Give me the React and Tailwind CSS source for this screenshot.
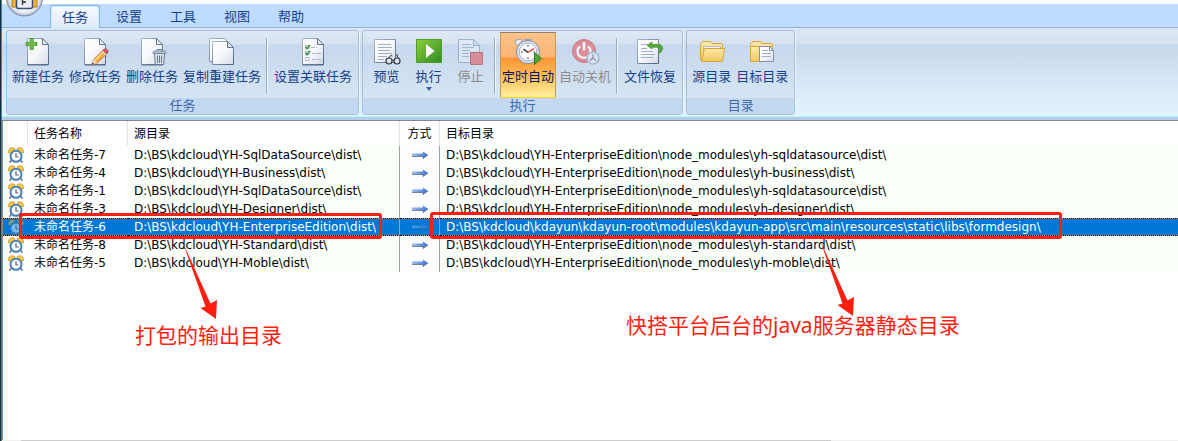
import React, { useState } from 'react';

const TABS = ["任务", "设置", "工具", "视图", "帮助"];

const TASKS = [
  { id: 7, source: "D:\\BS\\kdcloud\\YH-SqlDataSource\\dist\\", target: "D:\\BS\\kdcloud\\YH-EnterpriseEdition\\node_modules\\yh-sqldatasource\\dist\\" },
  { id: 4, source: "D:\\BS\\kdcloud\\YH-Business\\dist\\", target: "D:\\BS\\kdcloud\\YH-EnterpriseEdition\\node_modules\\yh-business\\dist\\" },
  { id: 1, source: "D:\\BS\\kdcloud\\YH-SqlDataSource\\dist\\", target: "D:\\BS\\kdcloud\\YH-EnterpriseEdition\\node_modules\\yh-sqldatasource\\dist\\" },
  { id: 3, source: "D:\\BS\\kdcloud\\YH-Designer\\dist\\", target: "D:\\BS\\kdcloud\\YH-EnterpriseEdition\\node_modules\\yh-designer\\dist\\" },
  { id: 6, source: "D:\\BS\\kdcloud\\YH-EnterpriseEdition\\dist\\", target: "D:\\BS\\kdcloud\\kdayun\\kdayun-root\\modules\\kdayun-app\\src\\main\\resources\\static\\libs\\formdesign\\" },
  { id: 8, source: "D:\\BS\\kdcloud\\YH-Standard\\dist\\", target: "D:\\BS\\kdcloud\\YH-EnterpriseEdition\\node_modules\\yh-standard\\dist\\" },
  { id: 5, source: "D:\\BS\\kdcloud\\YH-Moble\\dist\\", target: "D:\\BS\\kdcloud\\YH-EnterpriseEdition\\node_modules\\yh-moble\\dist\\" },
];

const Icon = ({ children }) => (
  <svg viewBox="0 0 32 32" className="w-8 h-8 shrink-0" aria-hidden="true">{children}</svg>
);

// gradients shared by all icons
const Defs = () => (
  <svg className="absolute w-0 h-0" aria-hidden="true">
    <defs>
      <linearGradient id="paper" x1="0" y1="0" x2="1" y2="1">
        <stop offset="0" stopColor="#ffffff" />
        <stop offset="0.5" stopColor="#f7f8fb" />
        <stop offset="1" stopColor="#d3dae6" />
      </linearGradient>
      <linearGradient id="paperEdge" x1="0" y1="0" x2="1" y2="1">
        <stop offset="0" stopColor="#a9b8cc" />
        <stop offset="1" stopColor="#4f6482" />
      </linearGradient>
      <linearGradient id="green" x1="0" y1="0" x2="1" y2="1">
        <stop offset="0" stopColor="#8ccf3e" />
        <stop offset="1" stopColor="#2f8a22" />
      </linearGradient>
      <linearGradient id="folder" x1="0" y1="0" x2="0" y2="1">
        <stop offset="0" stopColor="#fdeaa8" />
        <stop offset="1" stopColor="#f3c75e" />
      </linearGradient>
      <linearGradient id="arrowBlue" gradientUnits="userSpaceOnUse" x1="0" y1="0" x2="16" y2="0">
        <stop offset="0" stopColor="#9dbdf0" />
        <stop offset="1" stopColor="#3f74cc" />
      </linearGradient>
      <radialGradient id="orb" cx="0.5" cy="0.5" r="0.5">
        <stop offset="0.6" stopColor="#ffffff" />
        <stop offset="0.85" stopColor="#dfe5ee" />
        <stop offset="1" stopColor="#9fb0c6" />
      </radialGradient>
    </defs>
  </svg>
);

const Page = ({ x = 5.5, y = 3.5 }) => (
  <g transform={`translate(${x} ${y})`}>
    <path d="M0 0H15L21 6V26H0Z" fill="url(#paper)" stroke="url(#paperEdge)" />
    <path d="M15 0V6H21Z" fill="#e6ebf3" stroke="#5f7594" />
    <path d="M0 26.5H21" stroke="#5b6f8d" />
  </g>
);

const NewIcon = () => (
  <Icon>
    <Page />
    <path d="M8 3.500h3.400v3.700H15v3.400h-3.600v4H8v-4H4V7.200H8Z" fill="#6fb944" stroke="#3f8f2c" strokeWidth="0.7" />
  </Icon>
);

const EditIcon = () => (
  <Icon>
    <Page />
    <path d="M13 29.500l1.600-5L24 15.200l4 3.600L18.200 28Z" fill="#f5ab3c" stroke="#b5651d" strokeWidth="0.8" />
    <path d="M15.500 25.500L25 16.300" stroke="#ffe2a1" strokeWidth="1.200" />
    <path d="M24 15.200l1.700-1.400c1.300-.6 3.700 1.300 3.500 2.900L28 18.800Z" fill="#e0565c" stroke="#8f4650" strokeWidth="0.7" />
    <path d="M23 16.200l4 3.700" stroke="#cfd6e3" strokeWidth="1.300" />
    <path d="M13 29.500l1.600-5 3.600 3.500Z" fill="#fbe0ba" />
    <path d="M13 29.500l.7-2 1.400 1.300Z" fill="#333" />
  </Icon>
);

const DeleteIcon = () => (
  <Icon>
    <Page />
    <path d="M18.500 18.500H28.500L27.700 29.500H19.300Z" fill="#dfe5ed" stroke="#66788f" />
    <path d="M21.500 20.500V28M23.500 20.500V28M25.500 20.500V28" stroke="#66788f" />
    <path d="M17 17.500q0-1.500 1.500-1.500H28.500q1.500 0 1.500 1.500V18.500H17Z" fill="#b7c3d3" stroke="#70839c" strokeWidth="0.8" />
    <path d="M21 15.800v-1.300h5v1.300" fill="none" stroke="#70839c" />
  </Icon>
);

const CopyIcon = () => (
  <Icon>
    <path d="M3.500 3.500H18.500L24.500 9.500V26.500H3.500Z" fill="url(#paper)" stroke="url(#paperEdge)" />
    <path d="M6.500 6.500H21.500L27.500 12.500V29.500H6.500Z" fill="url(#paper)" stroke="url(#paperEdge)" />
    <path d="M21.500 6.500V12.500H27.500Z" fill="#e6ebf3" stroke="#5f7594" />
  </Icon>
);

const LinkedIcon = () => (
  <Icon>
    <Page />
    <path d="M8.500 10.500h3.500v3.500h-3.500zM8.500 16.500h3.500v3.500h-3.500zM8.500 22.500h3.500v3h-3.500z" fill="#fff" stroke="#90a2bb" strokeWidth="0.8" />
    <path d="M8.500 11.500l1.500 2 3-3.500M8.500 17.500l1.500 2 3-3.500" fill="none" stroke="#2f8a22" strokeWidth="1.200" />
    <path d="M14 12.500h6M15 18.500h9M15 24.500h9" stroke="#a9b6c8" strokeDasharray="4 1" />
  </Icon>
);

const PreviewIcon = () => (
  <Icon>
    <path d="M3.500 4.500H24.500V27.500H3.500Z" fill="url(#paper)" stroke="url(#paperEdge)" />
    <path d="M7 9.500h13M7 12.500h14M7 15.500h12M7 18.500h14M7 21.500h9M7 24.500h6" stroke="#9fb0c8" />
    <circle cx="18" cy="26" r="3" fill="#e4eaf1" fillOpacity="0.8" stroke="#333a44" strokeWidth="1.200" />
    <circle cx="26" cy="26" r="3" fill="#e4eaf1" fillOpacity="0.8" stroke="#333a44" strokeWidth="1.200" />
    <path d="M21 25.500q1-1 2 0M16 24l4-3.500 1.500.5M28 24l-2.500-4 1.500-.5" fill="none" stroke="#333a44" />
  </Icon>
);

const RunIcon = () => (
  <Icon>
    <path d="M3.500 4.500H28.500V27.500H3.500Z" fill="url(#green)" stroke="#4f9e2c" />
    <path d="M13 9L21.500 16L13 23Z" fill="#fff" />
  </Icon>
);

const StopIcon = () => (
  <Icon>
    <g opacity="0.65">
      <path d="M3.500 4.500H18.500L24.500 10.500V27.500H3.500Z" fill="#e6edf6" stroke="#7d98bf" />
      <path d="M18.500 4.500V10.500H24.500Z" fill="#d5e0ee" stroke="#7d98bf" />
      <path d="M7 9.500h9M7 12.500h12M7 15.500h8M7 18.500h7M7 21.500h7" stroke="#88a4cd" />
    </g>
    <path d="M15.500 17.500H27.500V29.500H15.500Z" fill="#d88e98" stroke="#b9707f" />
  </Icon>
);

const TimerIcon = () => (
  <Icon>
    <path d="M3 8.500l1-3.500L9 4l1 2.500L5.500 10.500Z" fill="#e8edf4" stroke="#8592a8" strokeWidth="0.8" />
    <path d="M12.500 4.500h7M16 4.500v3" stroke="#9aa6ba" strokeWidth="1.500" />
    <circle cx="16" cy="17" r="11.500" fill="#dfe6f0" stroke="#7e8ba3" />
    <circle cx="16" cy="17" r="8.800" fill="#fff" stroke="#a2afc4" />
    <path d="M16 10v1.500M9 17h1.500M21.500 17h1.500M16 22.500v1.500" stroke="#2a3550" strokeWidth="1.200" />
    <path d="M16 17.500l-4.500-3.500" stroke="#222" strokeWidth="1.400" />
    <path d="M16 17.500l6-4" stroke="#e0332c" strokeWidth="1.300" />
    <path d="M22.500 17.500L29.500 23.500L22.500 29.500Z" fill="#53a832" stroke="#2f7d1d" />
  </Icon>
);

const ShutdownIcon = () => (
  <Icon>
    <circle cx="15" cy="16" r="11.500" fill="#d98d98" stroke="#c97e8a" />
    <path d="M11 11.300a6.500 6.500 0 1 0 8 0" fill="none" stroke="#f0f1f7" strokeWidth="2.400" />
    <path d="M15 7v8.500" stroke="#f0f1f7" strokeWidth="2.600" />
    <circle cx="24" cy="23" r="6" fill="#dae3ef" stroke="#a7b7cf" strokeWidth="1.500" />
    <path d="M24 19V23l-3 2.500M24 23l3 2.500" fill="none" stroke="#8090ab" strokeWidth="1.100" />
  </Icon>
);

const RestoreIcon = () => (
  <Icon>
    <path d="M3.500 4.500H24.500V28.500H3.500Z" fill="url(#paper)" stroke="url(#paperEdge)" />
    <path d="M7 9.500h8M7 13.500h6M7 16.500h12M7 19.500h14M7 22.500h12" stroke="#9fb0c8" />
    <path d="M13 10.500L18 7V9.300H23C27.500 9.300 29 11.500 28.500 14.500Q27.700 17.700 24.500 18.500V15.800C26 15 26 12.500 23.500 12.300H18V14Z" fill="#55a637" stroke="#37862a" strokeWidth="0.600" />
  </Icon>
);

const FolderBack = () => (
  <path d="M4.500 24.500V9.500l2-3h8l1.500 2H25.500q1 0 1 1.500V24.500Z" fill="url(#folder)" stroke="#d9a73c" />
);

const SourceIcon = () => (
  <Icon>
    <FolderBack />
    <path d="M7.500 11.500h17v10H7.500Z" fill="#f4f6fa" stroke="#9aa6b8" strokeWidth="0.700" />
    <path d="M8.500 13.500H28.500L26.500 26.500H5.500Z" fill="url(#folder)" stroke="#d9a73c" />
  </Icon>
);

const TargetIcon = () => (
  <Icon>
    <FolderBack />
    <path d="M4.500 11.500h22V26.500H4.500Z" fill="url(#folder)" stroke="#d9a73c" />
    <path d="M13.500 11.500H23.500L27.500 15.500V26.500H13.500Z" fill="url(#paper)" stroke="#8294ae" />
    <path d="M23.500 11.500V15.500H27.500" fill="none" stroke="#8294ae" />
    <path d="M16 15.500h6M16 18.500h9M16 21.500h9" stroke="#9fb0c8" />
  </Icon>
);

const ClockIcon = ({ dim }) => (
  <svg viewBox="0 0 16 16" className={`block w-4 h-4 ${dim ? "opacity-50" : ""}`} aria-hidden="true">
    <path d="M3.500 13L1.500 15.800M12.500 13L14.500 15.800" stroke="#6c7480" strokeWidth="1.500" />
    <circle cx="8" cy="9.300" r="5.500" fill="#fdfdfd" stroke="#4682b8" strokeWidth="2" />
    <path d="M0.500 5.800C-0.300 2 3.500 -0.800 7 1.800Q6.500 3.300 4.500 3.800Q3 4.500 2.300 6Z" fill="#fbc93c" stroke="#b98a26" strokeWidth="0.700" />
    <path d="M15.500 5.800C16.300 2 12.500 -0.800 9 1.800Q9.500 3.300 11.500 3.800Q13 4.500 13.700 6Z" fill="#fbc93c" stroke="#b98a26" strokeWidth="0.700" />
    <path d="M8 6V10H10.500" fill="none" stroke="#5d6672" strokeWidth="1.200" />
  </svg>
);

const DirectionIcon = ({ dim }) => (
  <svg viewBox="0 0 16 8" className={`mx-auto block h-2 w-4 ${dim ? "opacity-50" : ""}`} aria-hidden="true">
    <path d="M0 2.500H11V0.500L16 4L11 7.500V5.500H0Z" fill="url(#arrowBlue)" />
    <path d="M0 5.500H11V7.500L16 4" fill="none" stroke="#4d6184" strokeWidth="0.700" />
  </svg>
);

const Orb = () => (
  <svg viewBox="0 0 40 18" className="absolute left-0.5 top-0 h-[18px] w-10" aria-hidden="true">
    <circle cx="20.500" cy="-2" r="18" fill="url(#orb)" stroke="#7f8da3" />
    <path d="M8 -2h5v9H8ZM28 -2h5v9H28Z" fill="#f3b43a" stroke="#b27a1d" />
    <path d="M12.500 -2H28.500V6.500Q28.500 8.500 26.500 8.500H14.500Q12.500 8.500 12.500 6.500Z" fill="#e9edf4" stroke="#39507c" strokeWidth="1.500" />
    <path d="M18.500 5V0M18.500 2H22" fill="none" stroke="#3a2c2c" strokeWidth="1.300" />
  </svg>
);

const RibbonButton = ({ icon, label, active, disabled, dropdown, onClick }) => {
  const color = disabled ? "text-[#8d8d8d]" : active ? "text-[#0a1466]" : "text-[#15428b]";
  const frame = active
    ? "border-[#c99a4a] border-t-[#8e8165] border-b-[#ffd02c] bg-[linear-gradient(to_bottom,#fbc38a_0%,#fdb573_38%,#fb9234_39%,#fdc25a_70%,#fff0a0_100%)]"
    : "border-transparent";
  return (
    <button
      type="button"
      disabled={disabled}
      onClick={onClick}
      className={`flex h-[66px] min-w-[41px] flex-col items-center border px-px pt-0.5 text-[13px] leading-[18px] whitespace-nowrap ${color} ${frame}`}
    >
      {icon}
      <span>{label}</span>
      {dropdown && (
        <svg viewBox="0 0 6 4" className="mt-0.5 h-1 w-1.5" aria-hidden="true">
          <path d="M0 0H6L3 4Z" fill="#3f64a5" />
        </svg>
      )}
    </button>
  );
};

const Separator = () => (
  <div className="mt-1.5 mr-[3px] ml-0.5 h-14 w-0.5 border-l border-[#8fabd3] bg-[#f3f8fd]" />
);

const RibbonGroup = ({ title, children }) => (
  <section className="flex h-[85px] flex-col overflow-hidden rounded-[3px] border border-[#a3bfdc] bg-[linear-gradient(to_bottom,#dfe9f5_0px,#d5e1f1_13px,#c7d8ed_14px,#d6e5f4_68px)] shadow-[1px_1px_0_#eef6fd]">
    <div className="flex flex-1 gap-px pt-px pr-1 pl-[3px]">{children}</div>
    <h2 className="h-4 bg-[#c2d9f1] text-center text-[13px] leading-[14px] text-[#3e6aaa]">{title}</h2>
  </section>
);

const HEAD_CELL = "border-r border-[#e5e5e5] pl-1.5 text-left font-normal";

const TaskTable = ({ selected, onSelect }) => (
  <table className="w-full table-fixed border-separate border-spacing-0 font-['DejaVu_Sans','Noto_Sans_CJK_SC',sans-serif] text-[12px] leading-4 whitespace-nowrap text-black">
    <colgroup>
      <col className="w-[25px]" />
      <col className="w-[100px]" />
      <col className="w-[272px]" />
      <col className="w-10" />
      <col />
    </colgroup>
    <thead>
      <tr className="h-[25px]">
        <th className={HEAD_CELL} aria-label="图标"></th>
        <th className={HEAD_CELL}>任务名称</th>
        <th className={HEAD_CELL}>源目录</th>
        <th className="border-r border-[#e5e5e5] text-center font-normal">方式</th>
        <th className="pl-1.5 text-left font-normal">目标目录</th>
      </tr>
    </thead>
    <tbody>
      {TASKS.map((task) => {
        const on = task.id === selected;
        // focus rectangle: black dots over the orange row background
        const cell = on
          ? "h-[18px] overflow-hidden border-y border-dotted border-y-black bg-[#0078d7] bg-clip-padding text-white"
          : "h-[18px] overflow-hidden";
        return (
          <tr key={task.id} onClick={() => onSelect(task.id)} className={on ? "bg-[#ff8728]" : "bg-white"}>
            <td className={`${cell} pl-[5px]`}><ClockIcon dim={on} /></td>
            <td className={`${cell} pl-1.5`}>未命名任务-{task.id}</td>
            <td className={`${cell} border-r border-r-[#a0a0a0] pl-1.5 [border-right-style:solid] ${on ? "" : "bg-[#fafffa]"}`}>{task.source}</td>
            <td className={`${cell} border-r border-r-[#a0a0a0] [border-right-style:solid] ${on ? "" : "bg-[#fdfcff]"}`}><DirectionIcon dim={on} /></td>
            <td className={`${cell} pl-1.5 ${on ? "" : "bg-[#fafffa]"}`}>{task.target}</td>
          </tr>
        );
      })}
    </tbody>
  </table>
);

const RedArrow = ({ className }) => (
  <svg viewBox="0 0 36 78" className={`absolute h-[78px] w-9 ${className}`} aria-hidden="true">
    <path d="M1 0L28.500 60.500L35 57L34 76L18.500 65L23.500 63.500Z" fill="#ff1e10" />
  </svg>
);

const App = () => {
  const [tab, setTab] = useState("任务");
  const [selected, setSelected] = useState(6);
  const [timer, setTimer] = useState(true);

  return (
    <div className="flex h-screen overflow-hidden border-l border-[#26292b] bg-white font-['Noto_Sans','Noto_Sans_CJK_SC',sans-serif]">
      <Defs />
      <div className="relative flex min-w-0 flex-1 flex-col border-l border-[#3a86c8]">
        <header className="bg-white pt-1">
          <nav className="flex h-6 items-end gap-1 border-b border-[#8db2e3] bg-[#bfdbff] pl-12">
            {TABS.map((name) => (
              <button
                key={name}
                type="button"
                onClick={() => setTab(name)}
                className={`h-[23px] w-[50px] rounded-t-[3px] border border-b-0 text-[13px] leading-[20px] text-[#15428b] ${name === tab ? "-mb-px border-[#8db2e3] bg-linear-to-b from-[#f4faff] to-[#dfeaf7] shadow-[inset_0_0_0_1px_#c8f2fd]" : "border-transparent"}`}
              >
                {name}
              </button>
            ))}
          </nav>
          <Orb />
        </header>

        <div className="flex h-[89px] shrink-0 gap-[3px] border-b border-[#b6f5fc] bg-[linear-gradient(to_bottom,#dde7f3_0px,#d5e0ef_16px,#c8d8ec_17px,#e2f4ff_88px)] pt-0.5 pl-1">
          <RibbonGroup title="任务">
            <RibbonButton icon={<NewIcon />} label="新建任务" />
            <RibbonButton icon={<EditIcon />} label="修改任务" />
            <RibbonButton icon={<DeleteIcon />} label="删除任务" />
            <RibbonButton icon={<CopyIcon />} label="复制重建任务" />
            <Separator />
            <RibbonButton icon={<LinkedIcon />} label="设置关联任务" />
          </RibbonGroup>
          <RibbonGroup title="执行">
            <RibbonButton icon={<PreviewIcon />} label="预览" />
            <RibbonButton icon={<RunIcon />} label="执行" dropdown />
            <RibbonButton icon={<StopIcon />} label="停止" disabled />
            <Separator />
            <RibbonButton icon={<TimerIcon />} label="定时自动" active={timer} onClick={() => setTimer(!timer)} />
            <RibbonButton icon={<ShutdownIcon />} label="自动关机" disabled />
            <Separator />
            <RibbonButton icon={<RestoreIcon />} label="文件恢复" />
          </RibbonGroup>
          <RibbonGroup title="目录">
            <RibbonButton icon={<SourceIcon />} label="源目录" />
            <RibbonButton icon={<TargetIcon />} label="目标目录" />
          </RibbonGroup>
        </div>
        <div className="h-[3px] shrink-0 bg-[#b4cdec]" />

        <main className="relative min-h-0 flex-1 border-t border-l border-[#828790]">
          <TaskTable selected={selected} onSelect={setSelected} />

          {/* Annotations */}
          <div className="pointer-events-none absolute top-[92px] left-4 h-[26px] w-[363px] rounded-[3px] border-3 border-[#ff1e10]" />
          <div className="pointer-events-none absolute top-[91px] left-[427px] h-[27px] w-[632px] rounded-[3px] border-3 border-[#ff1e10]" />
          <RedArrow className="top-[122px] left-[179px]" />
          <RedArrow className="top-[119px] left-[816px]" />
          <p className="absolute top-[199px] left-[132px] text-[21px] leading-[30px] text-[#ff1e10]">打包的输出目录</p>
          <p className="absolute top-[189px] left-[623px] text-[21px] leading-[30px] text-[#ff1e10]">快搭平台后台的java服务器静态目录</p>
        </main>

        {/* Horizontal scrollbar */}
        <div className="h-px shrink-0 bg-[#f0f0f0] pl-[19px]">
          <div className="h-px w-[70%] bg-[#cdcdcd]" />
        </div>
      </div>
    </div>
  );
};

export default App;
